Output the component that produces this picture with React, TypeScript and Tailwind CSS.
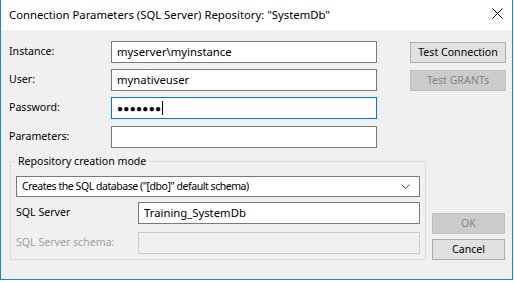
import React from "react";

const font = { fontFamily: '"Noto Sans", "Open Sans", sans-serif' };

function TextBox({ value, focused, disabled, className = "" }: { value?: React.ReactNode; focused?: boolean; disabled?: boolean; className?: string }) {
  return (
    <div
      className={`h-[22px] border flex items-center pl-[5px] text-[11.3px] ${
        disabled ? "bg-[#f0f0f0] border-[#cccccc]" : focused ? "bg-white border-[#0078d7]" : "bg-white border-[#7a7a7a]"
      } ${className}`}
    >
      {value}
    </div>
  );
}

function Button({ label, disabled, className = "" }: { label: string; disabled?: boolean; className?: string }) {
  return (
    <div
      className={`h-[21px] border flex items-center justify-center text-[10.6px] ${
        disabled ? "bg-[#cccccc] border-[#bfbfbf] text-[#838383]" : "bg-[#e1e1e1] border-[#adadad] text-black"
      } ${className}`}
    >
      {label}
    </div>
  );
}

export default function App() {
  return (
    <div className="w-[514px] h-[282px] bg-white" style={font}>
      <div className="w-[513px] h-[280px] border-l border-r border-b border-[#1883d7] flex flex-col">
        {/* title bar */}
        <div className="h-[30px] bg-white flex items-center justify-between pl-[8px] pr-[9px] text-[11.3px] text-black">
          <span>Connection Parameters (SQL Server) Repository: "SystemDb"</span>
          <svg width="11" height="11" viewBox="0 0 11 11" className="mb-[3px]">
            <path d="M0.5 0.5 L10.5 10.5 M10.5 0.5 L0.5 10.5" stroke="#000" strokeWidth="1" />
          </svg>
        </div>

        {/* body */}
        <div className="flex-1 bg-[#f0f0f0] pl-[8px] text-[10.6px] text-black">
          <div className="flex pt-[11px]">
            <div className="flex flex-col gap-[6px]">
              <div className="flex items-center">
                <span className="w-[102px]">Instance:</span>
                <TextBox className="w-[266px]" value="myserver\myinstance" />
              </div>
              <div className="flex items-center">
                <span className="w-[102px]">User:</span>
                <TextBox className="w-[266px]" value="mynativeuser" />
              </div>
              <div className="flex items-center">
                <span className="w-[102px]">Password:</span>
                <TextBox
                  className="w-[266px]"
                  focused
                  value={
                    <span className="flex items-center">
                      <span className="text-[10px] tracking-[0.3px]">●●●●●●●</span>
                      <span className="ml-[1px] w-[1px] h-[14px] bg-black" />
                    </span>
                  }
                />
              </div>
              <div className="flex items-center mt-[1px]">
                <span className="w-[102px]">Parameters:</span>
                <TextBox className="w-[266px]" />
              </div>
            </div>
            <div className="ml-[33px] mt-[1px] flex flex-col gap-[7px]">
              <Button className="w-[96px]" label="Test Connection" />
              <Button className="w-[96px]" label="Test GRANTs" disabled />
            </div>
          </div>

          <div className="flex mt-[13px]">
            <div className="relative ml-[1px] w-[416px] h-[99px] border border-[#dcdcdc] px-[5px] pt-[14px]">
              <span className="absolute left-[4px] top-[-9px] px-[3px] bg-[#f0f0f0] leading-[16px]">Repository creation mode</span>
              <div className="h-[21px] w-[404px] bg-white border border-[#7a7a7a] flex items-center justify-between pl-[5px] pr-[9px]">
                <span className="text-[10.5px] tracking-[-0.45px]">Creates the SQL database ("[dbo]" default schema)</span>
                <svg width="9" height="5" viewBox="0 0 9 5">
                  <path d="M0.5 0.5 L4.5 4.5 L8.5 0.5" stroke="#505050" strokeWidth="1" fill="none" />
                </svg>
              </div>
              <div className="flex items-center mt-[5px]">
                <span className="w-[122px]">SQL Server</span>
                <TextBox className="w-[282px]" value="Training_SystemDb" />
              </div>
              <div className="flex items-center mt-[8px]">
                <span className="w-[122px] text-[#a0a0a0]">SQL Server schema:</span>
                <TextBox className="w-[282px]" disabled />
              </div>
            </div>
            <div className="ml-[6px] flex flex-col justify-end gap-[5px]">
              <Button className="w-[73px]" label="OK" disabled />
              <Button className="w-[73px]" label="Cancel" />
            </div>
          </div>
        </div>
      </div>
    </div>
  );
}
